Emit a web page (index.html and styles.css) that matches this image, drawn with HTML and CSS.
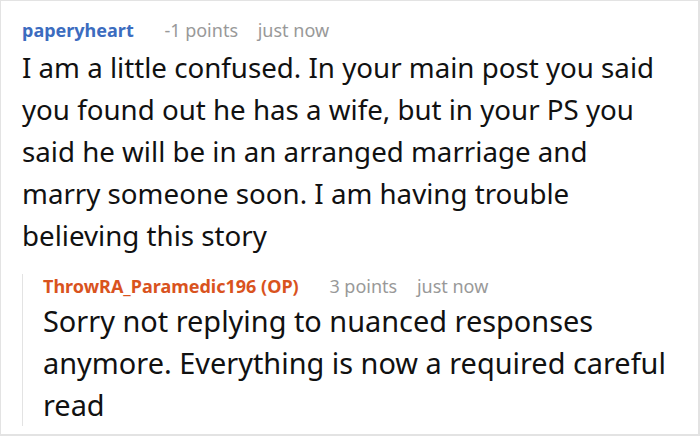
FILE: index.html
```html
<!DOCTYPE html>
<html lang="en">
<head>
    <meta charset="UTF-8">
    <meta name="viewport" content="width=device-width, initial-scale=1.0">
    <title>Comment thread</title>
    <link rel="stylesheet" href="styles.css">
</head>
<body>

    <div class="thread">
        <div class="comment">
            <div class="meta">
                <span class="author">paperyheart</span>
                <span class="points">-1 points</span>
                <span class="time">just now</span>
            </div>
            <p class="text">I am a little confused. In your main post you said you found out he has a wife, but in your PS you said he will be in an arranged marriage and marry someone soon. I am having trouble believing this story</p>

            <div class="reply">
                <div class="meta">
                    <span class="author op">ThrowRA_Paramedic196 (OP)</span>
                    <span class="points">3 points</span>
                    <span class="time">just now</span>
                </div>
                <p class="text">Sorry not replying to nuanced responses anymore. Everything is now a required careful read</p>
            </div>
        </div>
    </div>

</body>
</html>
```

FILE: styles.css
```css
body {
    margin: 0;
    font-family: "Noto Sans", "Open Sans", Arial, sans-serif;
    background-color: #fff;
    color: #111;
}
.thread {
    height: 436px;
    box-sizing: border-box;
    border: 1px solid #e3e3e3;
    border-right-width: 2px;
    border-bottom-width: 2px;
    padding: 17px 0 0 21px;
    overflow: hidden;
}
.meta {
    font-size: 18px;
    line-height: 24px;
    white-space: nowrap;
}
.author {
    font-weight: bold;
    color: #3c6cbf;
}
.author.op {
    color: #d9531e;
}
.points {
    color: #999;
    margin-left: 26px;
}
.time {
    color: #999;
    margin-left: 15px;
}
.text {
    margin: 4px 0 0 0;
    font-size: 27.7px;
    line-height: 42px;
    width: 640px;
}
.reply {
    margin-top: 28px;
    border-left: 1px solid #e3e3e3;
    padding-left: 20px;
}
.reply .meta {
    margin-top: -10px;
}
.reply .text {
    margin-top: 2px;
    font-size: 28.9px;
    width: 645px;
    margin-bottom: -9px;
}
```
